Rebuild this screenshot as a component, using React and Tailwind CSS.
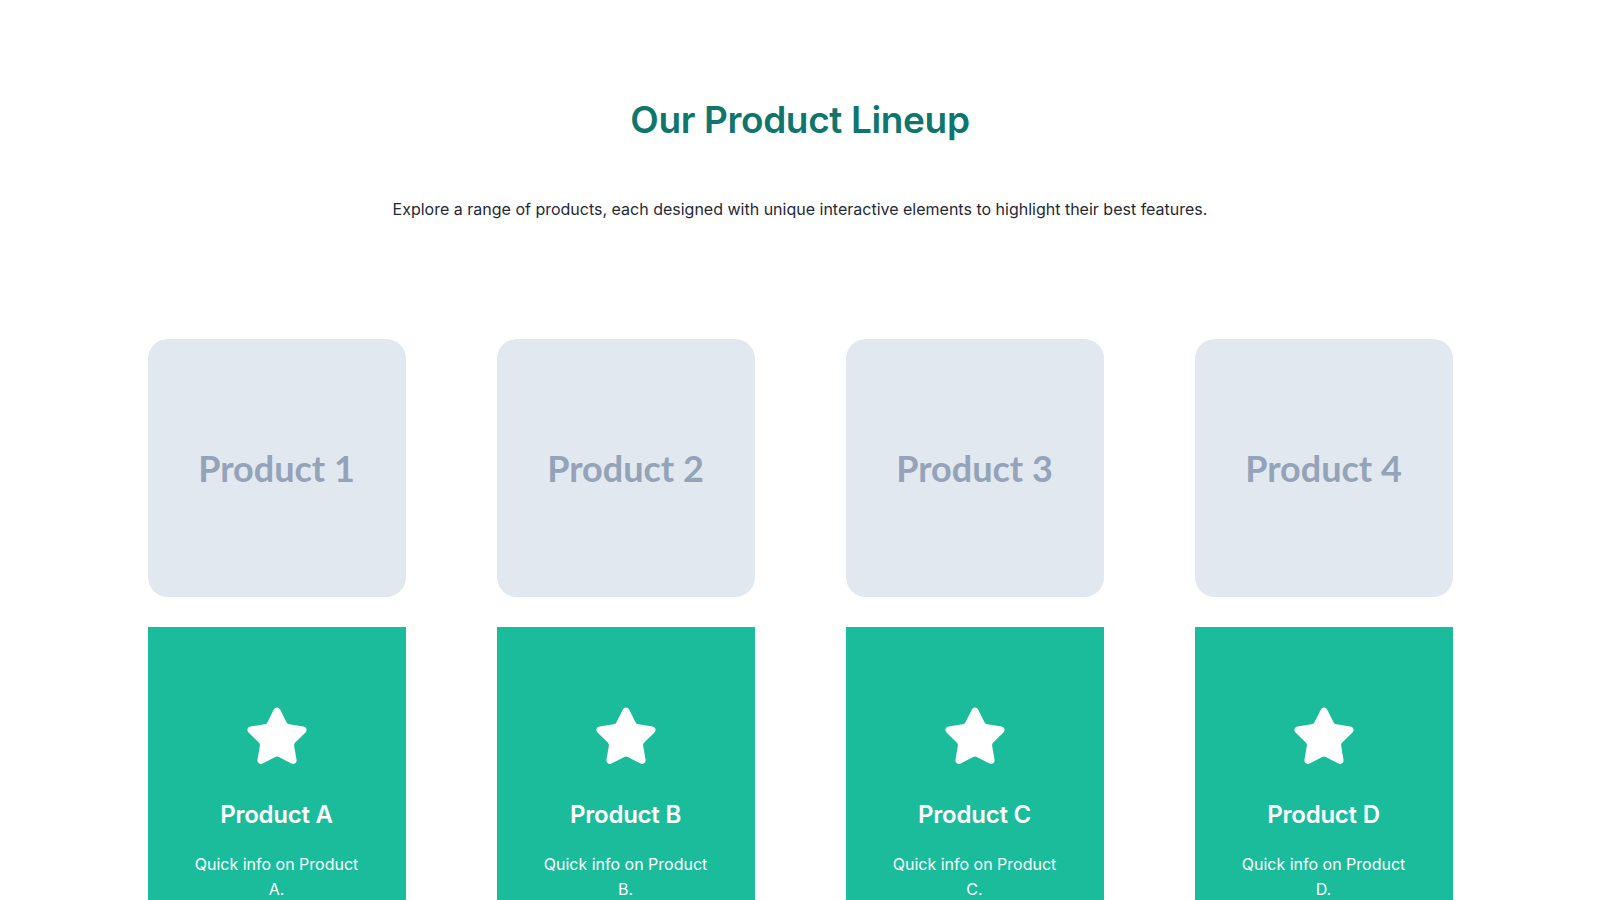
import React from 'react';
import { Star } from 'lucide-react';

const products = [
    { id: 1, letter: 'A' },
    { id: 2, letter: 'B' },
    { id: 3, letter: 'C' },
    { id: 4, letter: 'D' },
];

export default function App() {
    return (
        <div className="min-h-screen bg-white font-['Inter','Lato',sans-serif] overflow-hidden">
            <section className="pt-[98px] text-center">
                <h1 className="text-[37px] leading-[44px] font-semibold tracking-[-0.01em] text-[#0f766e]">Our Product Lineup</h1>
                <p className="mt-[55px] text-base leading-6 text-[#1f2937]">
                    Explore a range of products, each designed with unique interactive elements to highlight their best features.
                </p>
            </section>

            <div className="mx-auto mt-[118px] w-[1305px] flex justify-between">
                {products.map((p) => (
                    <div key={p.id} className="w-[258px] flex flex-col gap-[30px]">
                        <div className="h-[258px] rounded-[20px] bg-[#e2e8f0] flex items-center justify-center">
                            <span className="font-['Lato',sans-serif] text-[36px] font-bold text-[#94a3b8]">Product {p.id}</span>
                        </div>
                        <div className="h-[300px] bg-[#1abc9c] flex flex-col items-center pt-[77px] px-[44px] text-center text-white">
                            <Star size={66} fill="white" strokeWidth={1.5} />
                            <h3 className="mt-[29px] text-[24px] leading-8 font-semibold tracking-[-0.01em]">Product {p.letter}</h3>
                            <p className="mt-[21px] text-base leading-[25px]">Quick info on Product {p.letter}.</p>
                        </div>
                    </div>
                ))}
            </div>
        </div>
    );
}
